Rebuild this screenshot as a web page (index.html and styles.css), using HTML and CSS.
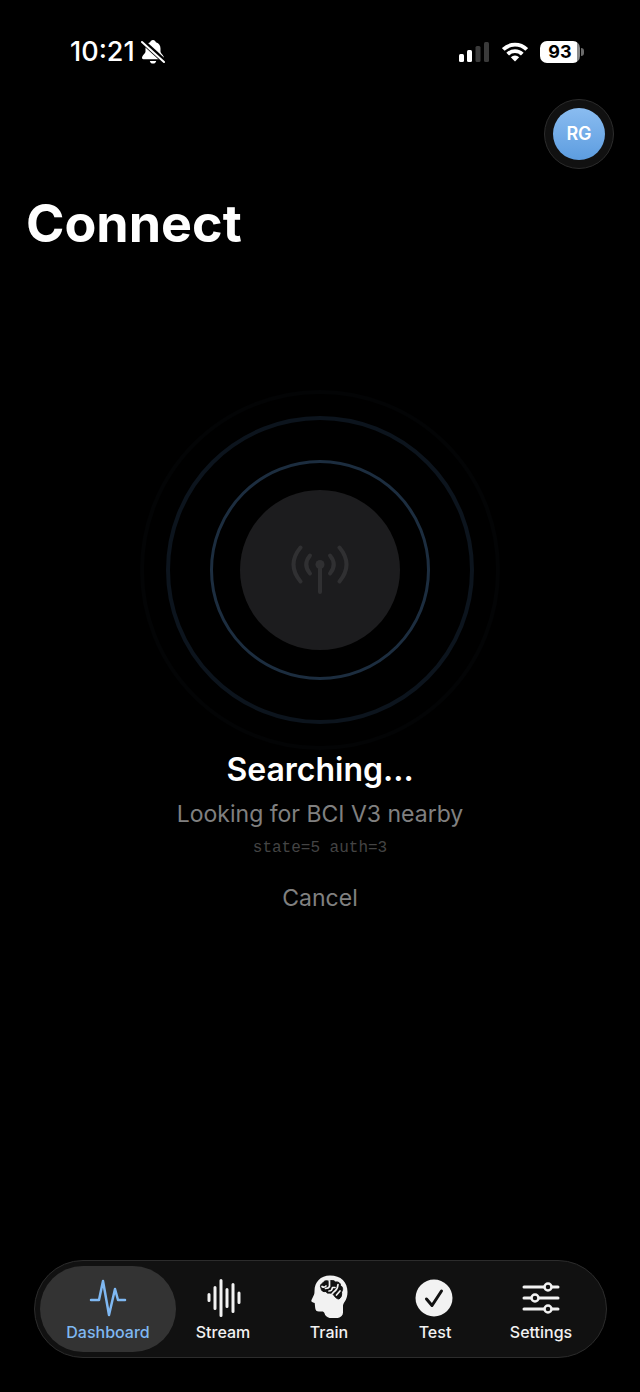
FILE: index.html
```html
<!DOCTYPE html>
<html lang="en">
<head>
<meta charset="utf-8">
<meta name="viewport" content="width=device-width, initial-scale=1">
<title>Connect</title>
<link rel="stylesheet" href="styles.css">
</head>
<body>

<div class="status-bar">
  <div class="status-left">
    <span class="time">10:21</span>
    <svg class="bell" width="24" height="24" viewBox="0 0 24 24" aria-hidden="true">
      <path fill="#fff" d="M12 0c-1.500 0-2.600 1-2.900 2.300C5.800 3.300 4.500 5.700 4.500 8.500v3c0 2-3.500 4-3.500 6.500 0 .8.600 1.200 1.400 1.200h19.200c.8 0 1.400-.4 1.400-1.200 0-2.500-3.500-4.500-3.500-6.500v-3c0-2.800-1.300-5.200-4.600-6.200C14.600 1 13.500 0 12 0zM8.800 21h6.400c-.3 1.600-1.600 2.600-3.200 2.600s-2.900-1-3.200-2.600z"/>
      <path stroke="#000" stroke-width="5" d="M0 0l24 22"/>
      <path stroke="#fff" stroke-width="2" stroke-linecap="round" d="M1 2l22 20"/>
    </svg>
  </div>
  <div class="status-right">
    <svg width="32" height="20" viewBox="0 0 32 20" aria-hidden="true">
      <rect x="1" y="12" width="5" height="8" rx="1.500" fill="#fff"/>
      <rect x="9" y="8" width="5" height="12" rx="1.500" fill="#fff"/>
      <rect x="17.500" y="4" width="5" height="16" rx="1.500" fill="#3a3a3a"/>
      <rect x="26" y="0" width="5" height="20" rx="1.500" fill="#3a3a3a"/>
    </svg>
    <svg width="26" height="20" viewBox="0 0 26 20" aria-hidden="true">
      <g fill="none" stroke="#fff" stroke-width="3.800">
        <path d="M1.300 7.500a16.600 16.600 0 0 1 23.400 0"/>
        <path d="M5.700 12.200a10.300 10.300 0 0 1 14.600 0"/>
      </g>
      <path fill="#fff" d="M13 19.500l-4.200-4.300a6 6 0 0 1 8.400 0z"/>
    </svg>
    <div class="battery"><span class="battery-level">93</span></div>
  </div>
</div>

<header class="header">
  <button class="avatar" type="button" aria-label="Account"><span class="avatar-initials">RG</span></button>
  <h1>Connect</h1>
</header>

<main class="search">
  <div class="radar">
    <div class="ring ring-outer"></div>
    <div class="ring ring-middle"></div>
    <div class="ring ring-inner"></div>
    <div class="radar-core">
      <svg width="60" height="56" viewBox="0 0 60 56" aria-hidden="true">
        <g fill="none" stroke="#303032" stroke-width="4" stroke-linecap="round">
          <path d="M30 23v27"/>
          <path d="M20 13.500q-7.500 9 0 18"/>
          <path d="M40 13.500q7.500 9 0 18"/>
          <path d="M10.500 5.500q-14 17 0 34"/>
          <path d="M49.500 5.500q14 17 0 34"/>
        </g>
        <circle cx="30" cy="22.500" r="4.500" fill="#303032"/>
      </svg>
    </div>
  </div>
  <h2>Searching...</h2>
  <p class="hint">Looking for BCI V3 nearby</p>
  <p class="debug">state=5 auth=3</p>
  <button class="cancel" type="button">Cancel</button>
</main>

<nav class="tab-bar">
  <a class="tab active" href="#dashboard">
    <svg width="40" height="40" viewBox="0 0 40 40" aria-hidden="true">
      <path fill="none" stroke="currentColor" stroke-width="2.500" stroke-linecap="round" stroke-linejoin="round" d="M3 22h8l4-19 6 34 6-26 3 11h7"/>
    </svg>
    <span>Dashboard</span>
  </a>
  <a class="tab" href="#stream">
    <svg width="40" height="40" viewBox="0 0 40 40" aria-hidden="true">
      <path fill="none" stroke="currentColor" stroke-width="3" stroke-linecap="round" d="M6 16.500v6M12 9.500v21M18 2.500v35M24 11.500v17M30 6.500v27M36 15v9.500"/>
    </svg>
    <span>Stream</span>
  </a>
  <a class="tab" href="#train">
    <svg width="40" height="44" viewBox="-1 -1 40 44" aria-hidden="true">
      <path fill="currentColor" d="M20 .5C10.500.5 4.500 7 4.500 16c0 2.300-.2 3.200-1 4.800L1.500 25c-.5 1.300 0 2 1.500 2.500l1.700.5.5 5c.3 2.500 1.300 3.500 3.800 3.500h3c1.300 0 2 .5 2.500 1.700.8 3.500 4.500 5.300 9 5.300 5.500 0 9.500-2 9.500-6V31c0-1.500.6-2.600 1.700-4.200C36.500 24 37.500 21 37.500 17 37.500 7 31 .5 20 .5z"/>
      <path fill="#111" stroke="#111" stroke-width="1" stroke-linejoin="round" d="M13 8c1-2.500 4-3 6-1.500 2-1.500 5-1.300 6.500.5 3-.5 5 1 5 3.500 2.500 1.500 2.800 4.500 1 6.500.5 2.500 0 5.500-2.500 7-2 0-3.500-1.500-5-3.500-1.500-1.800-3-2.500-5-2.500-1.500.5-2.500-.3-3-1.500-3 .8-5-1-5-3.500-1.500-2 .2-4.500 2-5z"/>
      <path fill="none" stroke="#f2f2f2" stroke-width="1.700" stroke-linecap="round" stroke-linejoin="round" d="M12 11.500q2 1.500 4-.5M19.500 6v5.500q-1 2-4 2M19 16q3 0 3.500-3.500h2.500M22 19q1.500-2 3.500-3.500T28 9.500M26.500 20l3.500-4"/>
    </svg>
    <span>Train</span>
  </a>
  <a class="tab" href="#test">
    <svg width="40" height="40" viewBox="0 0 40 40" aria-hidden="true">
      <circle cx="19" cy="20" r="18.500" fill="currentColor"/>
      <path fill="none" stroke="#111" stroke-width="3" stroke-linecap="round" stroke-linejoin="round" d="M11.500 21l5.500 6.500L26.500 13"/>
    </svg>
    <span>Test</span>
  </a>
  <a class="tab" href="#settings">
    <svg width="40" height="40" viewBox="0 0 40 40" aria-hidden="true">
      <path stroke="currentColor" stroke-width="3" stroke-linecap="round" d="M3 9h34M3 20h34M3 31h34"/>
      <g fill="#111" stroke="currentColor" stroke-width="2.500">
        <circle cx="27" cy="9" r="3.500"/>
        <circle cx="14" cy="20" r="3.500"/>
        <circle cx="27" cy="31" r="3.500"/>
      </g>
    </svg>
    <span>Settings</span>
  </a>
</nav>

</body>
</html>
```
FILE: styles.css
```css
* {
  box-sizing: border-box;
}

body {
  display: flex;
  flex-direction: column;
  min-height: 100vh;
  margin: 0;
  background-color: #000;
  color: #fff;
  font-family: Inter, "Liberation Sans", sans-serif;
}

h1, h2, p {
  margin: 0;
}

button {
  border: none;
  background: none;
  padding: 0;
  color: inherit;
  font-family: inherit;
  cursor: pointer;
}

.status-bar {
  display: flex;
  justify-content: space-between;
  align-items: center;
  padding: 36px 56px 0 70px;
  height: 68px;
}

.status-left {
  display: flex;
  align-items: center;
  gap: 6px;
}

.time {
  font-size: 27px;
  line-height: 32px;
  font-weight: 500;
}

.status-right {
  display: flex;
  align-items: center;
  gap: 12px;
}

.battery {
  display: flex;
  align-items: center;
  gap: 1px;
}

.battery-level {
  width: 40px;
  border-radius: 7px;
  background: linear-gradient(90deg, #fff 93%, #8a8a8a 93%);
  color: #000;
  font-size: 18px;
  line-height: 22px;
  font-weight: 700;
  text-align: center;
}

.battery::after {
  content: "";
  width: 3px;
  height: 8px;
  border-radius: 0 3px 3px 0;
  background-color: #6a6a6a;
}

.header {
  display: flex;
  flex-direction: column;
  padding: 31px 26px 0;
}

.avatar {
  display: grid;
  place-items: center;
  align-self: flex-end;
  width: 70px;
  height: 70px;
  border: 1px solid #2c2c2c;
  border-radius: 50%;
  background-color: #111;
}

.avatar-initials {
  width: 52px;
  border-radius: 50%;
  background: linear-gradient(#8abcf0, #5d9de0);
  color: #fff;
  font-size: 18px;
  line-height: 52px;
  font-weight: 600;
}

h1 {
  margin-top: 23px;
  font-size: 52px;
  line-height: 64px;
  font-weight: 700;
}

.search {
  display: flex;
  flex-direction: column;
  align-items: center;
  flex: 1;
  padding-top: 134px;
}

/* All rings share one grid cell so they stay concentric */
.radar {
  display: grid;
  place-items: center;
}

.ring,
.radar-core {
  grid-area: 1 / 1;
  border-radius: 50%;
}

.ring-outer {
  width: 360px;
  height: 360px;
  border: 4px solid #030405;
}

.ring-middle {
  width: 308px;
  height: 308px;
  border: 4px solid #0c141d;
}

.ring-inner {
  width: 220px;
  height: 220px;
  border: 3px solid #1c2d3f;
}

.radar-core {
  display: grid;
  place-items: center;
  width: 160px;
  height: 160px;
  background-color: #1c1c1e;
}

h2 {
  font-size: 32px;
  line-height: 40px;
  font-weight: 600;
}

.hint {
  margin-top: 8px;
  color: #808080;
  font-size: 23px;
  line-height: 32px;
}

.debug {
  margin-top: 8px;
  color: #444;
  font-family: "Liberation Mono", monospace;
  font-size: 16px;
  line-height: 20px;
}

.cancel {
  margin-top: 24px;
  color: #808080;
  font-size: 23px;
  line-height: 32px;
}

.tab-bar {
  display: flex;
  margin: 0 33px 34px 34px;
  padding: 5px 12px 5px 5px;
  border: 1px solid #2c2c2c;
  border-radius: 49px;
  background-color: #111;
}

.tab {
  display: flex;
  flex-direction: column;
  align-items: center;
  justify-content: flex-end;
  flex: 1;
  height: 86px;
  padding-bottom: 10px;
  border-radius: 43px;
  color: #f2f2f2;
  font-size: 16px;
  line-height: 20px;
  font-weight: 500;
  text-decoration: none;
}

.tab span {
  margin-top: 4px;
}

.tab.active {
  flex: 0 0 136px;
  margin-right: -6px;
  background-color: #333;
  color: #7fb8f2;
}
```
